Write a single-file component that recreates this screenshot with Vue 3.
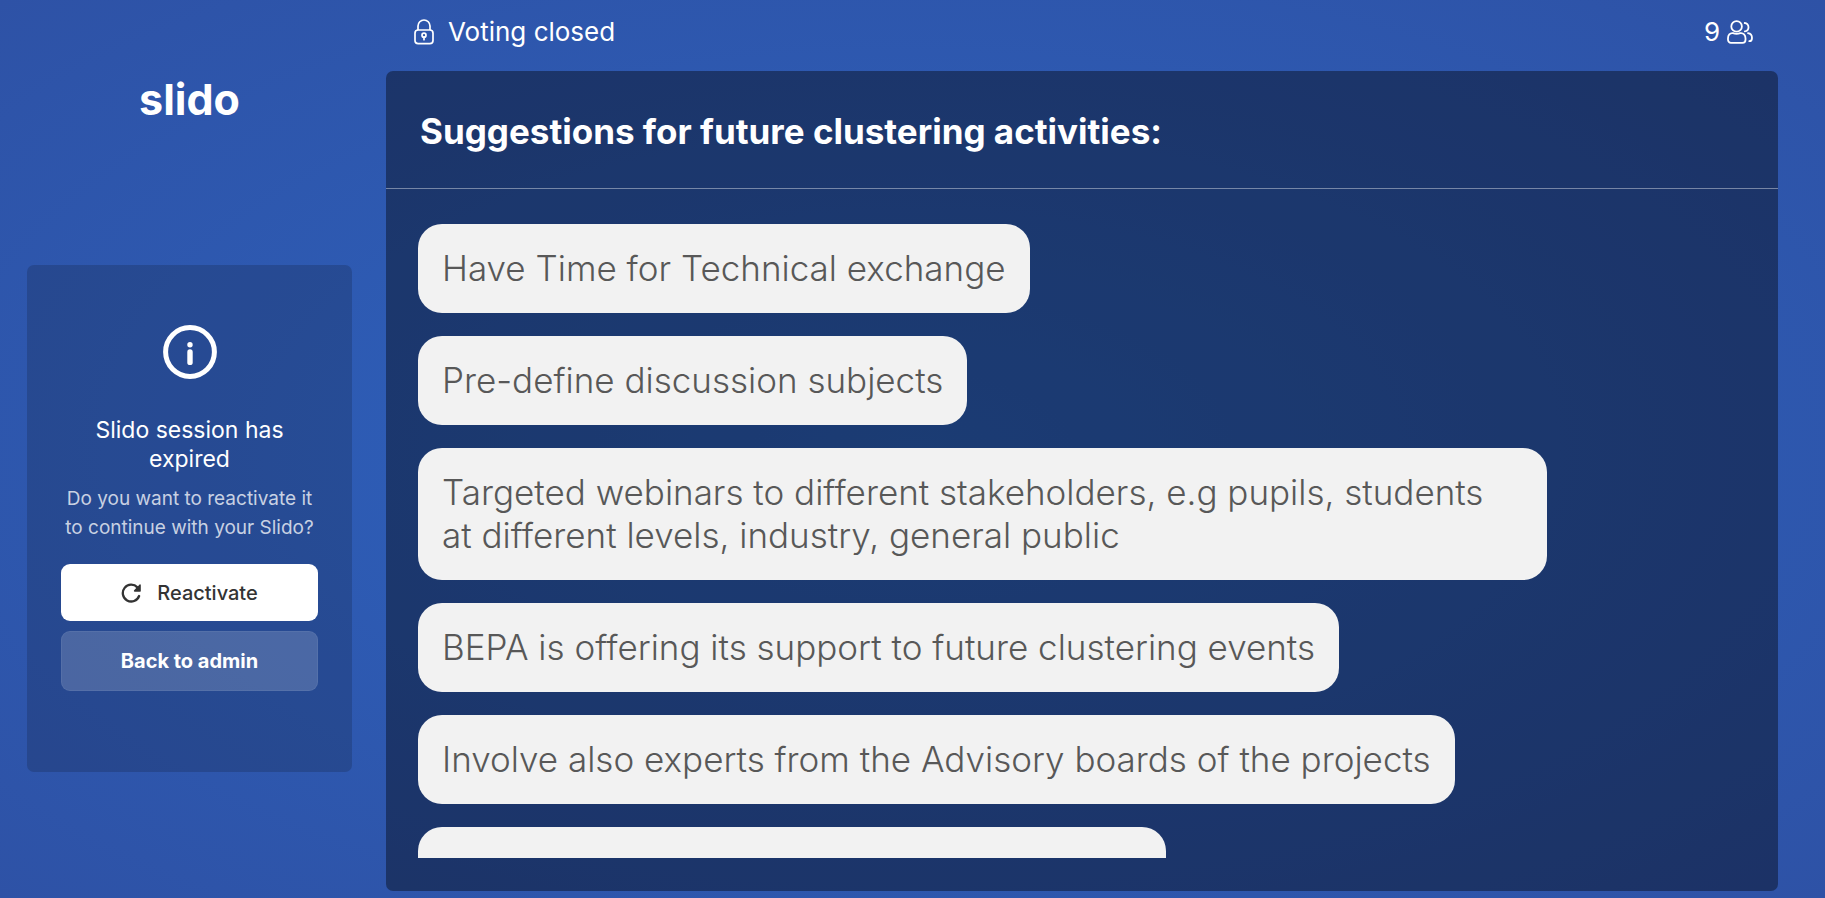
<script setup>
const ideas = [
  'Have Time for Technical exchange',
  'Pre-define discussion subjects',
  'Targeted webinars to different stakeholders, e.g pupils, students at different levels, industry, general public',
  'BEPA is offering its support to future clustering events',
  'Involve also experts from the Advisory boards of the projects',
]
</script>

<template>
  <div class="screen">
    <aside class="side">
      <div class="logo">slido</div>
      <section class="card">
        <svg class="info" viewBox="0 0 54 54" fill="none" aria-hidden="true">
          <circle cx="27" cy="27" r="24.4" stroke="#fff" stroke-width="5" />
          <circle cx="27" cy="19.7" r="2.7" fill="#fff" />
          <path d="M27 27v10.4" stroke="#fff" stroke-width="5.4" stroke-linecap="round" />
        </svg>
        <h2>Slido session has expired</h2>
        <p>Do you want to reactivate it to continue with your Slido?</p>
        <button type="button" class="btn primary">
          <svg class="reload" viewBox="0 0 20 20" fill="none" aria-hidden="true">
            <path d="M16.4 4.4A8.4 8.4 0 1 0 18.1 13" stroke="#333" stroke-width="2.3" stroke-linecap="round" />
            <path d="M19.8 2v6a.7.7 0 0 1-.7.7h-5.4c-.8 0-1.1-.9-.6-1.4l5.5-5.8c.4-.5 1.2-.2 1.2.5z" fill="#333" />
          </svg>
          <span>Reactivate</span>
        </button>
        <button type="button" class="btn secondary">Back to admin</button>
      </section>
    </aside>

    <main class="main">
      <header class="status">
        <div class="state">
          <svg class="lock" viewBox="0 0 20 26" fill="none" stroke="#fff" stroke-width="1.7" aria-hidden="true">
            <rect x="1" y="11" width="18" height="13.6" rx="3.2" />
            <path d="M4 11V7a6 6 0 0 1 12 0v4" />
            <circle cx="10" cy="16.2" r="2" />
            <path d="M10 18.3v2.4" stroke-linecap="round" />
          </svg>
          <span>Voting closed</span>
        </div>
        <div class="people">
          <span>9</span>
          <svg class="users" viewBox="0 0 26 24" fill="none" stroke="#fff" stroke-width="1.8" stroke-linecap="round" stroke-linejoin="round" aria-hidden="true">
            <circle cx="9.6" cy="6.4" r="5.3" />
            <path d="M6 13.2c2.3.9 4.9.9 7.2 0 3.3-.5 5.3 2 5.3 5v1.6c0 1.7-1.2 3.1-3 3.1H4c-1.8 0-3-1.4-3-3.1v-1.6c0-3 1.800-5.400 5-5z" />
            <path d="M17.7 3c2 .1 3.8 1.8 3.8 4.2 0 2.3-1.6 4-3.7 4.2" />
            <path d="M21 13.2c2.7.4 4 2.5 4 4.7 0 1.9-.8 3.3-2.7 3.3" />
          </svg>
        </div>
      </header>
      <section class="board">
        <h1>Suggestions for future clustering activities:</h1>
        <ul class="ideas">
          <li v-for="idea in ideas" :key="idea">{{ idea }}</li>
          <li class="blank"></li>
        </ul>
      </section>
    </main>
  </div>
</template>

<style>
body {
  background: #2e53a8;
}
</style>

<style scoped>
.screen {
  display: grid;
  grid-template-columns: 386px minmax(0, 1fr);
  height: 100vh;
  font-family: Inter, "Liberation Sans", sans-serif;
  color: #fff;
  background: radial-gradient(ellipse at center, #2d62be 0%, #2e52a6 100%);
}
.side {
  display: flex;
  flex-direction: column;
  padding: 73px 34px 0 27px;
}
.logo {
  height: 192px;
  font-size: 43px;
  font-weight: 700;
  line-height: 52px;
  text-align: center;
}
.card {
  display: flex;
  flex-direction: column;
  align-items: center;
  padding: 60px 34px 81px;
  border-radius: 7px;
  background: rgba(20, 30, 60, 0.25);
  text-align: center;
}
.info {
  width: 54px;
  height: 54px;
  margin-bottom: 37px;
}
h2 {
  margin: 0;
  font-size: 23px;
  font-weight: 400;
  line-height: 29px;
}
p {
  margin: 10px 0 22px;
  font-size: 19px;
  line-height: 29px;
  color: rgba(255, 255, 255, 0.75);
}
.btn {
  display: flex;
  align-items: center;
  justify-content: center;
  gap: 16px;
  width: 100%;
  padding: 0;
  border: 0;
  border-radius: 9px;
  font: inherit;
  font-size: 20px;
  cursor: pointer;
}
.primary {
  height: 57px;
  margin-bottom: 10px;
  font-weight: 500;
  color: #333;
  background: #fff;
}
.secondary {
  height: 60px;
  border: 1px solid rgba(255, 255, 255, 0.06);
  font-weight: 700;
  color: #fff;
  background: rgba(255, 255, 255, 0.17);
}
.reload {
  width: 20px;
  height: 20px;
}
.main {
  display: flex;
  flex-direction: column;
  min-width: 0;
  min-height: 0;
  padding: 0 47px 7px 0;
}
.status {
  display: flex;
  flex: none;
  align-items: center;
  justify-content: space-between;
  height: 71px;
  padding: 0 25px 8px 28px;
  box-sizing: border-box;
  font-size: 26px;
}
.state {
  display: flex;
  align-items: center;
  gap: 14px;
}
.people {
  display: flex;
  align-items: center;
  gap: 7px;
}
.lock {
  width: 20px;
  height: 26px;
}
.users {
  width: 26px;
  height: 24px;
}
.board {
  display: flex;
  flex: 1;
  flex-direction: column;
  min-height: 0;
  padding-bottom: 33px;
  border-radius: 7px;
  background: rgba(0, 0, 0, 0.39);
}
h1 {
  flex: none;
  margin: 0;
  padding: 39px 34px 35px;
  border-bottom: 1px solid rgba(255, 255, 255, 0.4);
  font-size: 35px;
  font-weight: 700;
  line-height: 43px;
}
.ideas {
  display: flex;
  flex: 1;
  flex-direction: column;
  align-items: flex-start;
  gap: 23px;
  min-height: 0;
  margin: 35px 32px 0;
  padding: 0;
  overflow: hidden;
  list-style: none;
}
.ideas li {
  flex: none;
  max-width: 85%;
  padding: 23px 24px;
  border-radius: 24px;
  box-sizing: border-box;
  background: #f2f2f2;
  color: #585858;
  font-size: 35px;
  font-weight: 350;
  line-height: 43px;
}
.ideas .blank {
  width: 748px;
  min-height: 89px;
}
</style>
